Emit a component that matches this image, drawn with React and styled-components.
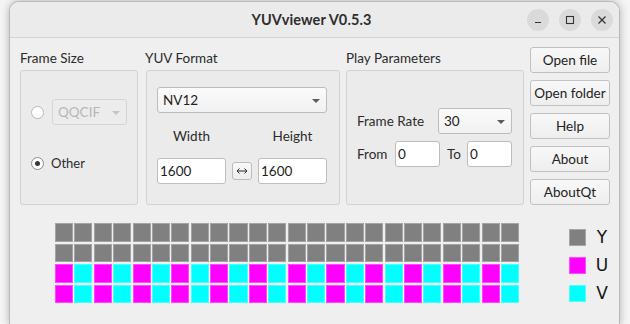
import React from 'react';
import styled, { createGlobalStyle } from 'styled-components';

const Global = createGlobalStyle`
  html, body { margin: 0; padding: 0; background: #f5f5f5; }
  body { font-family: Lato, "Noto Sans", sans-serif; font-size: 13px; color: #2b2b2b; }
  #root { padding: 1px 0 0 9px; height: 324px; box-sizing: border-box; overflow: hidden; }
  * { box-sizing: border-box; }
`;

const Window = styled.div`
  width: 611px;
  height: 324px;
  display: flex;
  flex-direction: column;
  background: #efefef;
  border: 1px solid #b9b9b9;
  border-bottom-color: #8a8a8a;
  border-radius: 10px 10px 0 0;
  box-shadow: 0 0 9px rgba(0, 0, 0, 0.28);
  overflow: hidden;
`;

const TitleBar = styled.div`
  height: 36px;
  flex: none;
  display: grid;
  grid-template-columns: 1fr auto 1fr;
  align-items: center;
  background: #ebebeb;
  border-bottom: 1px solid #d3d3d3;
  padding: 0 6px 0 0;
`;

const Title = styled.div`
  grid-column: 2;
  font-weight: 700;
  font-size: 14.5px;
  color: #2e2e2e;
  letter-spacing: 0.1px;
`;

const Controls = styled.div`
  grid-column: 3;
  justify-self: end;
  display: flex;
  gap: 10px;
`;

const CtrlButton = styled.div`
  width: 22px;
  height: 22px;
  border-radius: 50%;
  background: #dadada;
  display: flex;
  align-items: center;
  justify-content: center;
`;

const Content = styled.div`
  flex: 1;
  padding: 9px 9px 0 10px;
  display: flex;
  flex-direction: column;
`;

const TopRow = styled.div`
  display: flex;
  align-items: flex-start;
`;

const Group = styled.div`
  width: ${(p) => p.$w}px;
  margin-right: ${(p) => p.$mr}px;
  display: flex;
  flex-direction: column;
`;

const GroupLabel = styled.div`
  height: 23px;
  line-height: 23px;
  font-size: 13.5px;
  color: #2b2b2b;
  margin-left: ${(p) => p.$ml || 0}px;
`;

const Box = styled.div`
  height: 135px;
  border: 1px solid #d2d2d2;
  border-radius: 3px;
  background: #ebebeb;
  padding: ${(p) => p.$pad};
  display: flex;
  flex-direction: column;
`;

const RadioRow = styled.div`
  display: flex;
  align-items: center;
  height: 26px;
  margin-top: ${(p) => p.$mt || 0}px;
  gap: ${(p) => p.$gap}px;
`;

const Radio = styled.span`
  width: 13px;
  height: 13px;
  border-radius: 50%;
  border: 1px solid ${(p) => (p.$disabled ? '#b9b9b9' : '#8c8c8c')};
  background: #fff;
  display: flex;
  align-items: center;
  justify-content: center;
  flex: none;
  &::after {
    content: '';
    width: 5px;
    height: 5px;
    border-radius: 50%;
    background: ${(p) => (p.$checked ? '#3a3a3a' : 'transparent')};
  }
`;

const Combo = styled.div`
  width: ${(p) => p.$w}px;
  height: 26px;
  flex: none;
  display: flex;
  align-items: center;
  justify-content: space-between;
  padding: 0 6px 0 5px;
  border: 1px solid ${(p) => (p.$disabled ? '#d4d4d4' : '#bdbdbd')};
  border-radius: 3px;
  background: ${(p) => (p.$disabled ? '#ececec' : 'linear-gradient(#fbfbfb, #f1f1f1)')};
  color: ${(p) => (p.$disabled ? '#b7b7b7' : '#222')};
  font-size: 13.5px;
`;

const Arrow = styled.span`
  width: 0;
  height: 0;
  border-left: 4.5px solid transparent;
  border-right: 4.5px solid transparent;
  border-top: 4.5px solid ${(p) => (p.$disabled ? '#c4c4c4' : '#5c5c5c')};
  margin-top: 1px;
`;

const SizeGrid = styled.div`
  display: grid;
  grid-template-columns: 69px 20px 69px;
  column-gap: 6px;
  align-items: center;
  margin-top: 13px;
`;

const SizeLabel = styled.div`
  grid-column: ${(p) => p.$col};
  text-align: center;
  height: 20px;
  line-height: 20px;
  font-size: 13.5px;
  margin-bottom: 12px;
`;

const Field = styled.div`
  width: ${(p) => (p.$w ? `${p.$w}px` : 'auto')};
  height: 26px;
  flex: none;
  border: 1px solid #bdbdbd;
  border-radius: 3px;
  background: #fff;
  padding: 0 2px;
  display: flex;
  align-items: center;
  color: #1c1c1c;
  font-size: 13.5px;
`;

const SwapButton = styled.div`
  width: 20px;
  height: 18px;
  border: 1px solid #bcbcbc;
  border-radius: 3px;
  background: linear-gradient(#f8f8f8, #eeeeee);
  display: flex;
  align-items: center;
  justify-content: center;
`;

const ParamRow = styled.div`
  display: flex;
  align-items: center;
  width: 155px;
  margin-top: ${(p) => p.$mt || 0}px;
`;

const ParamLabel = styled.span`
  width: ${(p) => (p.$w ? `${p.$w}px` : 'auto')};
  flex: ${(p) => (p.$grow ? 1 : 'none')};
  margin-left: ${(p) => p.$ml || 0}px;
  font-size: 13.5px;
  color: #2b2b2b;
`;

const ButtonColumn = styled.div`
  width: 80px;
  display: flex;
  flex-direction: column;
  gap: 7px;
`;

const PushButton = styled.div`
  height: 26px;
  border: 1px solid #c1c1c1;
  border-radius: 3px;
  background: linear-gradient(#f8f8f8, #eeeeee);
  display: flex;
  align-items: center;
  justify-content: center;
  font-size: 13.5px;
  color: #222;
  white-space: nowrap;
`;

const BottomRow = styled.div`
  display: flex;
  align-items: flex-start;
  margin-top: 18px;
  padding-left: 35px;
`;

const CellGrid = styled.div`
  width: 464px;
  height: 80px;
  flex: none;
  display: grid;
  grid-template-columns: repeat(24, 1fr);
  grid-template-rows: repeat(4, 1fr);
  column-gap: 1.3px;
  row-gap: 2px;
`;

const Cell = styled.div`
  background: ${(p) => p.$color};
  box-shadow: inset 0 0 0 1px rgba(255, 255, 255, 0.28);
`;

const Legend = styled.div`
  flex: none;
  margin-left: 50px;
  margin-top: 5.5px;
  display: flex;
  flex-direction: column;
  gap: 11px;
`;

const LegendItem = styled.div`
  display: flex;
  align-items: center;
  gap: 8px;
  height: 17px;
`;

const Swatch = styled.div`
  width: 17px;
  height: 17px;
  background: ${(p) => p.$color};
  box-shadow: inset 0 0 0 1px rgba(255, 255, 255, 0.3);
`;

const LegendLetter = styled.span`
  width: 16px;
  text-align: center;
  font-family: "DejaVu Sans", sans-serif;
  font-size: 17px;
  color: #151515;
`;

const GRAY = '#808080';
const MAGENTA = '#ff00ff';
const CYAN = '#00ffff';

function cellColor(row, col) {
  if (row < 2) return GRAY;
  return col % 2 === 0 ? MAGENTA : CYAN;
}

const cells = [];
for (let r = 0; r < 4; r++) {
  for (let c = 0; c < 24; c++) cells.push({ key: `${r}-${c}`, color: cellColor(r, c) });
}

export default function App() {
  return (
    <>
      <Global />
      <Window>
        <TitleBar>
          <Title>YUVviewer V0.5.3</Title>
          <Controls>
            <CtrlButton>
              <svg width="10" height="10" viewBox="0 0 10 10">
                <path d="M2 7.5h6" stroke="#333" strokeWidth="1.2" />
              </svg>
            </CtrlButton>
            <CtrlButton>
              <svg width="10" height="10" viewBox="0 0 10 10">
                <rect x="1.5" y="1.5" width="7" height="7" fill="none" stroke="#333" strokeWidth="1.1" />
              </svg>
            </CtrlButton>
            <CtrlButton>
              <svg width="10" height="10" viewBox="0 0 10 10">
                <path d="M1.5 1.5l7 7M8.5 1.5l-7 7" stroke="#333" strokeWidth="1.2" />
              </svg>
            </CtrlButton>
          </Controls>
        </TitleBar>
        <Content>
          <TopRow>
            <Group $w={118} $mr={8}>
              <GroupLabel>Frame Size</GroupLabel>
              <Box $pad="28px 0 0 10px">
                <RadioRow $gap={8}>
                  <Radio $disabled />
                  <Combo $w={75} $disabled>
                    QQCIF
                    <Arrow $disabled />
                  </Combo>
                </RadioRow>
                <RadioRow $gap={7} $mt={25}>
                  <Radio $checked />
                  <span>Other</span>
                </RadioRow>
              </Box>
            </Group>
            <Group $w={194} $mr={6}>
              <GroupLabel $ml={-1}>YUV Format</GroupLabel>
              <Box $pad="16px 0 0 10px">
                <Combo $w={170}>
                  NV12
                  <Arrow />
                </Combo>
                <SizeGrid>
                  <SizeLabel $col={1}>Width</SizeLabel>
                  <SizeLabel $col={3}>Height</SizeLabel>
                  <Field>1600</Field>
                  <SwapButton>
                    <svg width="12" height="8" viewBox="0 0 12 8">
                      <path d="M1 4h10M3.5 1.5L1 4l2.5 2.5M8.5 1.5L11 4 8.5 6.5" fill="none" stroke="#2a2a2a" strokeWidth="1" />
                    </svg>
                  </SwapButton>
                  <Field>1600</Field>
                </SizeGrid>
              </Box>
            </Group>
            <Group $w={178} $mr={6}>
              <GroupLabel>Play Parameters</GroupLabel>
              <Box $pad="37px 0 0 10px">
                <ParamRow>
                  <ParamLabel $grow>Frame Rate</ParamLabel>
                  <Combo $w={74}>
                    30
                    <Arrow />
                  </Combo>
                </ParamRow>
                <ParamRow $mt={7}>
                  <ParamLabel $w={38}>From</ParamLabel>
                  <Field $w={45}>0</Field>
                  <ParamLabel $w={20} $ml={7}>To</ParamLabel>
                  <Field $w={45}>0</Field>
                </ParamRow>
              </Box>
            </Group>
            <ButtonColumn>
              <PushButton>Open file</PushButton>
              <PushButton>Open folder</PushButton>
              <PushButton>Help</PushButton>
              <PushButton>About</PushButton>
              <PushButton>AboutQt</PushButton>
            </ButtonColumn>
          </TopRow>
          <BottomRow>
            <CellGrid>
              {cells.map((c) => (
                <Cell key={c.key} $color={c.color} />
              ))}
            </CellGrid>
            <Legend>
              <LegendItem>
                <Swatch $color={GRAY} />
                <LegendLetter>Y</LegendLetter>
              </LegendItem>
              <LegendItem>
                <Swatch $color={MAGENTA} />
                <LegendLetter>U</LegendLetter>
              </LegendItem>
              <LegendItem>
                <Swatch $color={CYAN} />
                <LegendLetter>V</LegendLetter>
              </LegendItem>
            </Legend>
          </BottomRow>
        </Content>
      </Window>
    </>
  );
}
